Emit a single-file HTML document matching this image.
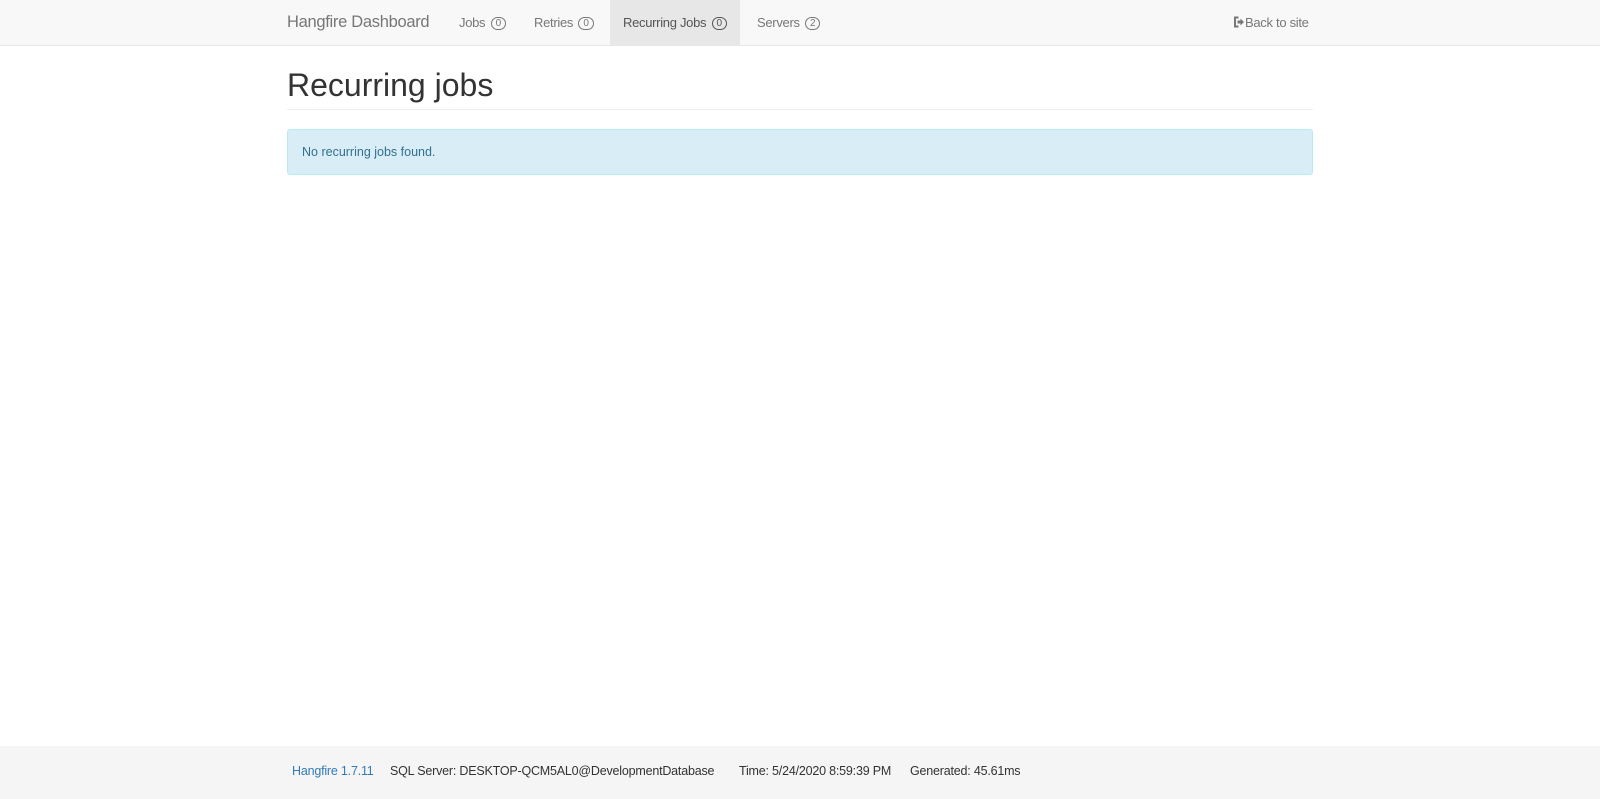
<!DOCTYPE html>
<html><head><style>
body{margin:0;width:1600px;height:799px;background:#fff;font-family:"Liberation Sans",sans-serif;position:relative;overflow:hidden}
.nav{position:absolute;top:0;left:0;width:1600px;height:45px;background:#f8f8f8;border-bottom:1px solid #e7e7e7}
.nav span{position:absolute;top:0;line-height:45px;font-size:13px;color:#777;letter-spacing:-0.3px}
.brand{font-size:16.5px!important;left:287px}
.b{display:inline-block;border:1px solid #777;border-radius:8px;font-size:10px;line-height:11px;padding:0 4px;margin-left:2px;vertical-align:1px}
.act{background:#e7e7e7;color:#555!important;padding:0 13px}
h1{position:absolute;left:287px;top:67px;margin:0;font-size:32px;font-weight:normal;color:#333}
.hr{position:absolute;left:287px;top:109px;width:1026px;border-top:1px solid #eee}
.alert{position:absolute;left:287px;top:129px;width:1026px;height:46px;background:#d9edf7;border:1px solid #bce8f1;border-radius:3px;color:#31708f;font-size:12.5px;line-height:44px;box-sizing:border-box;padding-left:14px}
.foot{position:absolute;top:746px;left:0;width:1600px;height:53px;background:#f5f5f5;font-size:12.5px;color:#333;line-height:18px;letter-spacing:-0.2px}
.foot span{position:absolute;top:16px}
</style></head><body>
<div class="nav">
<span class="brand">Hangfire Dashboard</span>
<span style="left:459px">Jobs <i class="b" style="font-style:normal">0</i></span>
<span style="left:534px">Retries <i class="b" style="font-style:normal">0</i></span>
<span class="act" style="left:610px">Recurring Jobs <i class="b" style="font-style:normal;border-color:#555">0</i></span>
<span style="left:757px">Servers <i class="b" style="font-style:normal">2</i></span>
<span style="left:1232px"><svg width="13" height="12" viewBox="0 0 12 12" style="vertical-align:-1px"><path d="M6 1.5H2.5v9H6" fill="none" stroke="#777" stroke-width="2"/><path d="M5 4.5h3V2.5l3.5 3.5L8 9.5V7.5H5z" fill="#777"/></svg>Back to site</span>
</div>
<h1>Recurring jobs</h1>
<div class="hr"></div>
<div class="alert">No recurring jobs found.</div>
<div class="foot">
<span style="left:292px;color:#337ab7">Hangfire 1.7.11</span>
<span style="left:390px">SQL Server: DESKTOP-QCM5AL0@DevelopmentDatabase</span>
<span style="left:739px">Time: 5/24/2020 8:59:39 PM</span>
<span style="left:910px">Generated: 45.61ms</span>
</div>
</body></html>
